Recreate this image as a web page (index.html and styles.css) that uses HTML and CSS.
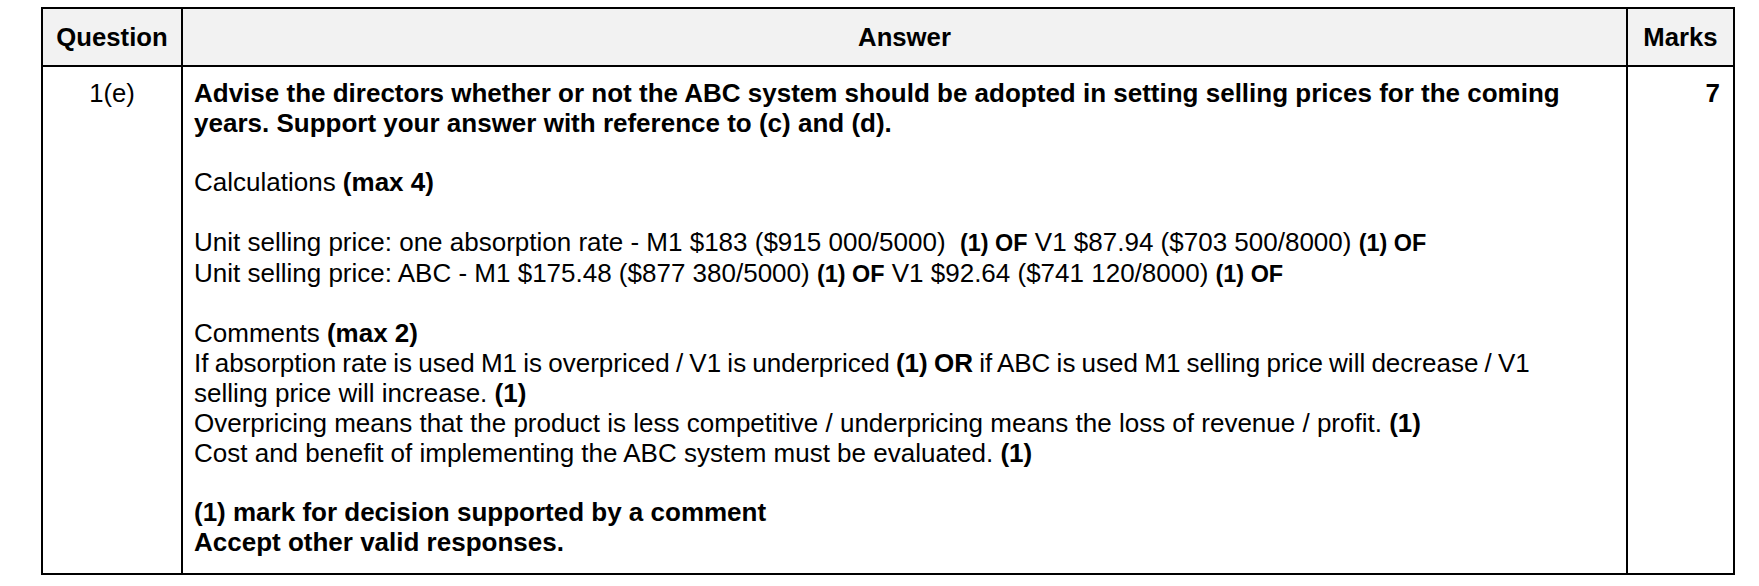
FILE: index.html
```html
<!DOCTYPE html>
<html lang="en">
<head>
<meta charset="utf-8">
<title>Mark scheme 1(e)</title>
<link rel="stylesheet" href="styles.css">
</head>
<body>
<div class="scheme" role="table">
  <div class="cell head" role="columnheader">Question</div>
  <div class="cell head" role="columnheader">Answer</div>
  <div class="cell head" role="columnheader">Marks</div>

  <div class="cell qnum" role="cell">1(e)</div>
  <div class="cell answer" role="cell">
    <p class="bold">Advise the directors whether or not the ABC system should be adopted in setting selling prices for the coming<br>years. Support your answer with reference to (c) and (d).</p>
    <p>Calculations <b>(max 4)</b></p>
    <p>Unit selling price: one absorption rate - M1 $183 ($915 000/5000) &nbsp;<b class="small">(1) OF</b> V1 $87.94 ($703 500/8000) <b class="small">(1) OF</b><br>Unit selling price: ABC - M1 $175.48 ($877 380/5000) <b class="small">(1) OF</b> V1 $92.64 ($741 120/8000) <b class="small">(1) OF</b></p>
    <p>Comments <b>(max 2)</b><br><span class="tight">If absorption rate is used M1 is overpriced / V1 is underpriced <b>(1) OR</b> if ABC is used M1 selling price will decrease / V1</span><br>selling price will increase. <b>(1)</b><br>Overpricing means that the product is less competitive / underpricing means the loss of revenue / profit. <b>(1)</b><br>Cost and benefit of implementing the ABC system must be evaluated. <b>(1)</b></p>
    <p class="bold">(1) mark for decision supported by a comment<br>Accept other valid responses.</p>
  </div>
  <div class="cell marks" role="cell">7</div>
</div>
</body>
</html>
```

FILE: styles.css
```css
html, body {
  margin: 0;
  padding: 0;
  background: #ffffff;
}

body {
  padding: 7px 0 0 41px;
  font-family: "Liberation Sans", Arial, sans-serif;
  font-size: 26px;
  line-height: 29.8px;
  color: #000000;
}

.scheme {
  display: grid;
  grid-template-columns: 140px 1445px 107px;
  grid-template-rows: 58px auto;
  width: 1694px;
  box-sizing: border-box;
  border-top: 2px solid #000;
  border-left: 2px solid #000;
}

.cell {
  box-sizing: border-box;
  border-right: 2px solid #000;
  border-bottom: 2px solid #000;
}

.head {
  background: #f2f2f2;
  font-weight: bold;
  font-size: 25.7px;
  display: flex;
  align-items: center;
  justify-content: center;
  padding-top: 1px;
}

.qnum {
  text-align: center;
  font-size: 25.7px;
  padding-top: 12px;
}

.marks {
  text-align: right;
  font-weight: bold;
  padding: 12px 13px 0 0;
}

.answer {
  padding: 12px 10px 15px 11px;
}

.answer p {
  margin: 0 0 29.8px 0;
  white-space: nowrap;
}

.answer p:last-child {
  margin-bottom: 0;
}

.bold {
  font-weight: bold;
}

.small {
  font-size: 0.9em;
}

.tight {
  word-spacing: -1px;
}
```
